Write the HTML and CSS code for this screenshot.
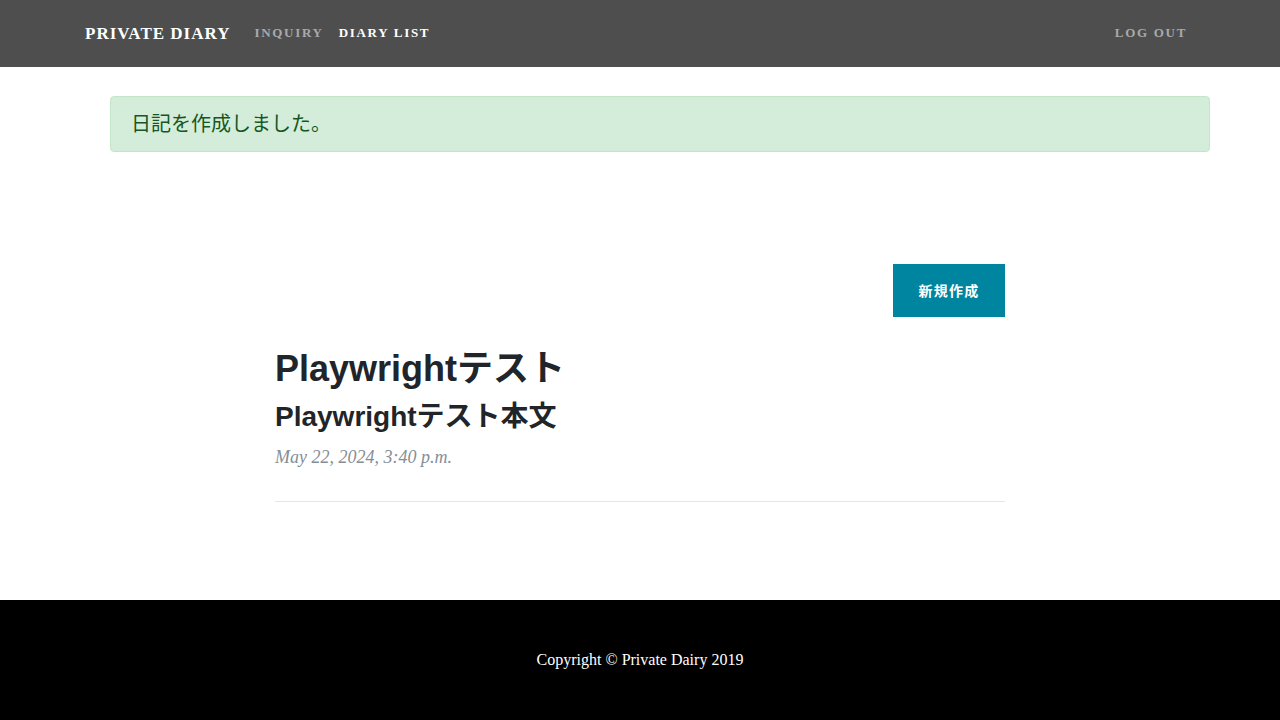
FILE: index.html
```html
<!DOCTYPE html>
<html lang="ja">
<head>
<meta charset="utf-8">
<title>Private Diary</title>
<link rel="stylesheet" href="styles.css">
</head>
<body>
<nav class="navbar">
  <div class="nav-inner">
    <a class="brand" href="#">PRIVATE DIARY</a>
    <ul class="nav-links">
      <li><a class="nav-link muted" href="#">INQUIRY</a></li>
      <li><a class="nav-link active" href="#">DIARY LIST</a></li>
    </ul>
    <ul class="nav-links nav-right">
      <li><a class="nav-link muted" href="#">LOG OUT</a></li>
    </ul>
  </div>
</nav>

<div class="messages">
  <div class="alert">日記を作成しました。</div>
</div>

<main class="content">
  <div class="actions">
    <a class="btn" href="#">新規作成</a>
  </div>
  <div class="post">
    <h2 class="post-title">Playwrightテスト</h2>
    <h3 class="post-subtitle">Playwrightテスト本文</h3>
    <p class="post-meta">May 22, 2024, 3:40 p.m.</p>
  </div>
  <hr class="divider">
</main>

<footer class="footer">
  <p class="copyright">Copyright © Private Dairy 2019</p>
</footer>
</body>
</html>
```
FILE: styles.css
```css
* { box-sizing: border-box; }
html, body { margin: 0; padding: 0; }
body {
  font-family: "Liberation Serif", "Noto Sans CJK JP", serif;
  color: #212529;
  background: #fff;
  font-size: 16px;
}
a { text-decoration: none; }

.navbar {
  height: 67px;
  background: #4e4e4e;
}
.nav-inner {
  width: 1140px;
  margin: 0 auto;
  padding: 0 15px;
  height: 100%;
  display: flex;
  align-items: center;
}
.brand {
  color: #fff;
  font-weight: 700;
  font-size: 17px;
  letter-spacing: 1px;
  margin-right: 16px;
  padding-top: 1px;
}
.nav-links {
  list-style: none;
  margin: 0;
  padding: 0;
  display: flex;
}
.nav-right { margin-left: auto; }
.nav-link {
  display: block;
  font-size: 13px;
  font-weight: 800;
  letter-spacing: 1.7px;
  padding: 9px 7px 11px 8px;
}
.nav-right .nav-link { padding-right: 8px; }
.nav-link.muted { color: #a9a9a9; }
.nav-link.active { color: #fff; }

.messages {
  width: 1140px;
  margin: 29px auto 0;
  padding-left: 40px;
}
.alert {
  height: 56px;
  display: flex;
  align-items: center;
  padding: 0 21px 4px 20px;
  background: #d4edda;
  border: 1px solid #c3e6cb;
  border-radius: 4px;
  color: #155724;
  font-family: "Noto Sans CJK JP", sans-serif;
  font-size: 20px;
}

.content {
  width: 730px;
  margin: 112px auto 0;
  padding-bottom: 98px;
}
.actions {
  display: flex;
  justify-content: flex-end;
}
.btn {
  display: block;
  width: 112px;
  height: 53px;
  line-height: 53px;
  text-align: center;
  background: #0085a1;
  color: #fff;
  font-family: "Noto Sans CJK JP", sans-serif;
  font-size: 14px;
  font-weight: 700;
  letter-spacing: 1.3px;
}
.post { margin-top: 30px; }
.post-title {
  margin: 0;
  font-family: "Liberation Sans", "Noto Sans CJK JP", sans-serif;
  font-size: 36px;
  font-weight: 700;
  line-height: 1.2;
}
.post-subtitle {
  margin: 10px 0 0;
  font-family: "Liberation Sans", "Noto Sans CJK JP", sans-serif;
  font-size: 28px;
  font-weight: 700;
  line-height: 1.2;
}
.post-meta {
  margin: 10px 0 0;
  color: #868e96;
  font-style: italic;
  font-size: 18px;
  line-height: 1.5;
}
.divider {
  margin: 30px 0 0;
  border: 0;
  border-top: 1px solid #e5e5e5;
}

.footer {
  background: #000;
  height: 120px;
  display: flex;
  align-items: center;
  justify-content: center;
}
.copyright {
  margin: 0;
  color: #fff;
  font-size: 16px;
}
```
